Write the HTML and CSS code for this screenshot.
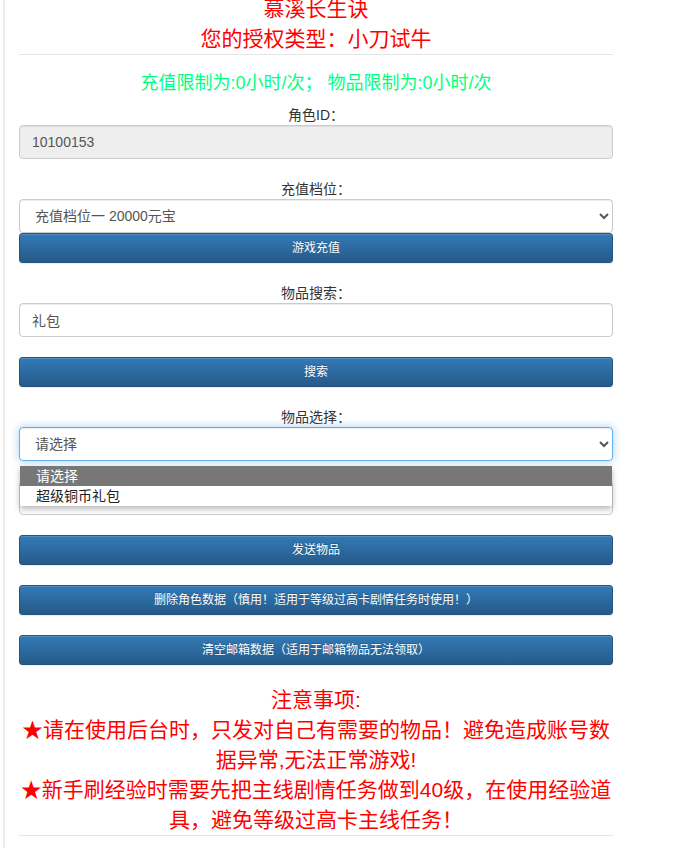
FILE: index.html
```html
<!DOCTYPE html>
<html lang="zh-CN">
<head>
<meta charset="utf-8">
<title>慕溪长生诀</title>
<link rel="stylesheet" href="styles.css">
</head>
<body>
<div class="frame">
  <div class="head">
    <h1 class="title">慕溪长生诀</h1>
    <h2 class="title">您的授权类型：小刀试牛</h2>
  </div>
  <hr class="rule">
  <p class="limit">充值限制为:0小时/次； 物品限制为:0小时/次</p>
  <form class="form">
    <div class="group">
      <label class="label">角色ID：</label>
      <input class="control readonly" type="text" value="10100153" readonly>
    </div>
    <div class="group">
      <label class="label">充值档位：</label>
      <select class="control select">
        <option>充值档位一 20000元宝</option>
      </select>
      <button type="button" class="btn">游戏充值</button>
    </div>
    <div class="group">
      <label class="label">物品搜索：</label>
      <input class="control" type="text" value="礼包">
    </div>
    <button type="button" class="btn">搜索</button>
    <div class="group has-popup">
      <label class="label">物品选择：</label>
      <select class="control select focus">
        <option>请选择</option>
        <option>超级铜币礼包</option>
      </select>
      <label class="label under">物品数量：</label>
      <input class="control" type="text" value="">
      <ul class="popup">
        <li class="opt active">请选择</li>
        <li class="opt">超级铜币礼包</li>
      </ul>
    </div>
    <button type="button" class="btn">发送物品</button>
    <button type="button" class="btn">删除角色数据（慎用！适用于等级过高卡剧情任务时使用！）</button>
    <button type="button" class="btn">清空邮箱数据（适用于邮箱物品无法领取）</button>
    <div class="notice">
      <p class="notice-line">注意事项:</p>
      <p class="notice-line">★请在使用后台时，只发对自己有需要的物品！避免造成账号数据异常,无法正常游戏!</p>
      <p class="notice-line">★新手刷经验时需要先把主线剧情任务做到40级，在使用经验道具，避免等级过高卡主线任务！</p>
    </div>
  </form>
  <hr class="rule">
</div>
</body>
</html>
```

FILE: styles.css
```css
html, body {
  margin: 0;
  padding: 0;
  background: #fff;
}

body {
  font-family: "Liberation Sans", "Noto Sans CJK SC", sans-serif;
  font-size: 14px;
  color: #333;
  overflow: hidden;
}

.frame {
  margin-left: 3px;
  border-left: 2px solid #ececec;
  padding: 0 15px 0 14px;
  width: 594px;
  min-height: 100vh;
}

.head {
  margin-top: -6px;
  text-align: center;
}

.title {
  margin: 0;
  font-size: 21px;
  line-height: 30px;
  font-weight: 400;
  color: #ff0000;
}

.rule {
  margin: 0;
  border: 0;
  border-top: 1px solid #e5e5e5;
  height: 0;
}

.limit {
  margin: 13px 0 0;
  text-align: center;
  font-size: 18px;
  line-height: 30px;
  color: #00ff7f;
}

.form {
  margin-top: 7px;
  display: flex;
  flex-direction: column;
  gap: 20px;
}

.group {
  display: flex;
  flex-direction: column;
}

.has-popup {
  position: relative;
}

.label {
  display: block;
  text-align: center;
  line-height: 20px;
  font-size: 14px;
  color: #333;
}

.label.under {
  padding-top: 4px;
  line-height: 16px;
}

.control {
  box-sizing: border-box;
  display: block;
  width: 100%;
  height: 34px;
  margin: 0;
  padding: 6px 12px;
  font-family: inherit;
  font-size: 14px;
  line-height: 20px;
  color: #555;
  background: #fff;
  border: 1px solid #ccc;
  border-radius: 4px;
  box-shadow: inset 0 1px 1px rgba(0, 0, 0, .075);
  outline: none;
}

.readonly {
  background: #eee;
}

.select {
  padding: 6px 8px 6px 11px;
}

.focus {
  border-color: #66afe9;
  box-shadow: inset 0 1px 1px rgba(0, 0, 0, .075), 0 0 8px rgba(102, 175, 233, .6);
}

.btn {
  box-sizing: border-box;
  display: block;
  width: 100%;
  height: 30px;
  margin: 0;
  padding: 5px 10px;
  font-family: inherit;
  font-size: 12px;
  line-height: 18px;
  color: #fff;
  text-align: center;
  text-shadow: 0 -1px 0 rgba(0, 0, 0, .2);
  background: linear-gradient(to bottom, #337ab7 0, #265a88 100%);
  border: 1px solid #245580;
  border-radius: 3px;
  box-shadow: inset 0 1px 0 rgba(255, 255, 255, .15), 0 1px 1px rgba(0, 0, 0, .075);
  cursor: pointer;
}

.popup {
  position: absolute;
  top: 59px;
  left: 1px;
  right: 1px;
  margin: 0;
  padding: 0;
  list-style: none;
  background: #fff;
  box-shadow: 0 3px 6px rgba(0, 0, 0, .28);
}

.opt {
  padding-left: 16px;
  height: 20px;
  line-height: 20px;
  font-size: 14px;
  color: #222;
}

.opt.active {
  background: #777;
  color: #fff;
}

.notice {
  text-align: center;
  color: #ff0000;
  font-size: 21px;
  line-height: 30px;
}

.notice-line {
  margin: 0;
}
```
